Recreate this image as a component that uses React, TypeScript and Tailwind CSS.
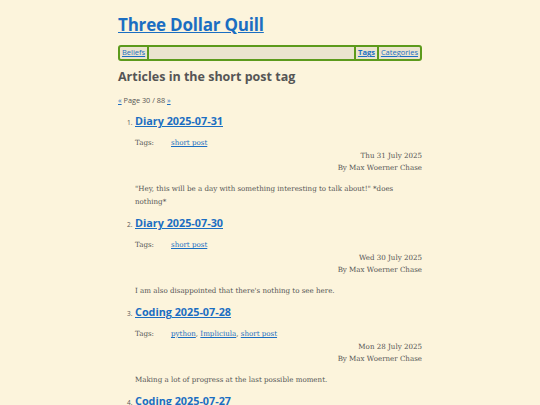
import React from 'react';

const posts = [
  {
    title: 'Diary 2025-07-31',
    tags: ['short post'],
    date: 'Thu 31 July 2025',
    excerpt: '"Hey, this will be a day with something interesting to talk about!" *does nothing*',
  },
  {
    title: 'Diary 2025-07-30',
    tags: ['short post'],
    date: 'Wed 30 July 2025',
    excerpt: "I am also disappointed that there's nothing to see here.",
  },
  {
    title: 'Coding 2025-07-28',
    tags: ['python', 'Impliciula', 'short post'],
    date: 'Mon 28 July 2025',
    excerpt: 'Making a lot of progress at the last possible moment.',
  },
  {
    title: 'Coding 2025-07-27',
    tags: ['short post'],
    date: 'Sun 27 July 2025',
    excerpt: 'Nothing much to say.',
  },
];

const sans = 'font-["Open_Sans","Noto_Sans",sans-serif]';
const serif = 'font-["DejaVu_Serif","Liberation_Serif",serif]';
const link = 'text-[#1b6ec2] underline';

export default function App() {
  return (
    <div className="min-h-screen bg-[#fcf4dc] text-[#555]">
      <div className="mx-auto w-[304px] pt-[13px]">
        <h1 className={`${sans} text-[17px] font-bold leading-[24px] tracking-[-0.2px]`}>
          <a href="#" className={link}>Three Dollar Quill</a>
        </h1>

        <nav className={`${sans} mt-[8px] flex h-[16px] items-center rounded-[3px] border-2 border-[#5c9a1c] bg-[#ebe4cf] text-[7.5px] leading-none`}>
          <a href="#" className={`${link} px-[2px]`}>Beliefs</a>
          <span className="h-full border-l-2 border-[#5c9a1c]" />
          <span className="flex-1" />
          <span className="h-full border-l-2 border-[#5c9a1c]" />
          <a href="#" className={`${link} px-[2px] font-bold`}>Tags</a>
          <span className="h-full border-l-2 border-[#5c9a1c]" />
          <a href="#" className={`${link} px-[2px]`}>Categories</a>
        </nav>

        <h2 className={`${sans} mt-[7px] text-[12.5px] font-bold leading-[18px] text-[#555]`}>
          Articles in the short post tag
        </h2>

        <p className={`${sans} mt-[9px] text-[7.3px] leading-[10px]`}>
          <a href="#" className={link}>«</a> Page 30 / 88 <a href="#" className={link}>»</a>
        </p>

        <ol className="mt-[6px]">
          {posts.map((post, i) => (
            <li key={post.title} className="mb-[5.5px]">
              <div className="flex items-baseline">
                <span className={`${sans} w-[17px] pl-[9px] text-[6.5px]`}>{i + 1}.</span>
                <a href="#" className={`${sans} ${link} text-[10.8px] font-bold leading-[20px]`}>{post.title}</a>
              </div>
              <div className={`${serif} pl-[17px] text-[7.1px] leading-[12.5px]`}>
                <div className="mt-[6px] flex">
                  <span className="w-[36px]">Tags:</span>
                  <span>
                    {post.tags.map((tag, j) => (
                      <span key={tag}>
                        <a href="#" className={link}>{tag}</a>
                        {j < post.tags.length - 1 && ', '}
                      </span>
                    ))}
                  </span>
                </div>
                <div className="text-right">
                  <div>{post.date}</div>
                  <div>By Max Woerner Chase</div>
                </div>
                <p className="mt-[7px] pr-[20px] leading-[13px]">{post.excerpt}</p>
              </div>
            </li>
          ))}
        </ol>
      </div>
    </div>
  );
}
